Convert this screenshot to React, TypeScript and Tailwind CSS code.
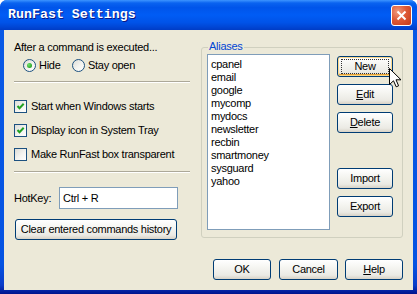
import React from "react";

const aliases = [
  "cpanel",
  "email",
  "google",
  "mycomp",
  "mydocs",
  "newsletter",
  "recbin",
  "smartmoney",
  "sysguard",
  "yahoo",
];

const btn =
  "flex items-center justify-center rounded-[3px] border border-[#003c74] bg-[linear-gradient(180deg,#ffffff_0%,#f5f5f1_40%,#ebeae4_80%,#d8d2c6_100%)] text-black";

function XpButton({
  className = "",
  children,
}: {
  className?: string;
  children: React.ReactNode;
}) {
  return <div className={`${btn} ${className}`}>{children}</div>;
}

function Radio({ checked }: { checked?: boolean }) {
  return (
    <div className="flex h-[13px] w-[13px] shrink-0 items-center justify-center rounded-full border border-[#1c5180] bg-[linear-gradient(135deg,#dcdcd7_0%,#f4f4f0_55%,#ffffff_100%)]">
      {checked && (
        <div className="h-[5px] w-[5px] rounded-full bg-[radial-gradient(circle_at_35%_35%,#6fe36a_0%,#2ca52a_70%,#1f8a1d_100%)]" />
      )}
    </div>
  );
}

function Check({ checked, label }: { checked?: boolean; label: string }) {
  return (
    <div className="flex h-[13px] items-center">
      <div className="relative h-[13px] w-[13px] shrink-0 border border-[#1c5180] bg-[linear-gradient(135deg,#dcdcd7_0%,#f4f4f0_55%,#ffffff_100%)]">
        {checked && (
          <svg width="11" height="11" viewBox="0 0 11 11" className="absolute left-0 top-0">
            <path d="M2.5 5 L4.5 7.2 L8.7 2.8" fill="none" stroke="#21a121" strokeWidth="2" />
          </svg>
        )}
      </div>
      <span className="ml-[4px] leading-[13px]">{label}</span>
    </div>
  );
}

function Separator() {
  return <div className="h-[2px] border-t border-t-[#aca899] border-b border-b-white" />;
}

export default function App() {
  return (
    <div className="h-[294px] w-[417px] bg-white font-['Liberation_Sans',Arial,sans-serif] text-[11px] tracking-[-0.28px] text-black">
      <div className="relative flex h-[294px] w-[417px] flex-col rounded-t-[7px] bg-[linear-gradient(180deg,#0a5ae6_0%,#0553e2_90%,#0a3cc8_97%,#00138c_100%)]">
        {/* title bar */}
        <div className="flex h-[30px] shrink-0 items-center rounded-t-[7px] bg-[linear-gradient(180deg,#3d95ff_0%,#0a63f0_10%,#0055ea_25%,#005cf5_50%,#0053e8_75%,#0046d5_90%,#003cc5_100%)] pl-[8px] pr-[5px]">
          <span className="flex-1 font-['Liberation_Mono',monospace] text-[13.3px] font-bold tracking-normal text-white [text-shadow:1px_1px_#0a1883]">
            RunFast Settings
          </span>
          <div className="flex h-[21px] w-[21px] items-center justify-center rounded-[3px] border border-white bg-[radial-gradient(circle_at_30%_30%,#f09a7e_0%,#de5a37_45%,#c2391a_100%)]">
            <svg width="11" height="11" viewBox="0 0 11 11">
              <path d="M1.5 1.5 L9.5 9.5 M9.5 1.5 L1.5 9.5" stroke="white" strokeWidth="2" />
            </svg>
          </div>
        </div>

        {/* client area */}
        <div className="mx-[4px] mb-[4px] flex flex-1 flex-col bg-[#ece9d8] px-[10px] pt-[11px]">
          <div className="flex gap-[11px]">
            {/* left column */}
            <div className="flex w-[176px] flex-col">
              <p className="h-[13px] leading-[13px]">After a command is executed...</p>
              <div className="mt-[5px] flex h-[13px] items-center pl-[9px]">
                <div className="flex w-[49px] items-center">
                  <Radio checked />
                  <span className="ml-[3px] leading-[13px]">Hide</span>
                </div>
                <Radio />
                <span className="ml-[3px] leading-[13px]">Stay open</span>
              </div>
              <div className="mt-[9px]">
                <Separator />
              </div>
              <div className="mt-[17px]">
                <Check checked label="Start when Windows starts" />
              </div>
              <div className="mt-[11px]">
                <Check checked label="Display icon in System Tray" />
              </div>
              <div className="mt-[11px]">
                <Check label="Make RunFast box transparent" />
              </div>
              <div className="mt-[10px]">
                <Separator />
              </div>
              <div className="mt-[14px] flex items-center">
                <span className="w-[45px]">HotKey:</span>
                <div className="flex h-[22px] w-[119px] items-center border border-[#7f9db9] bg-white pl-[3px]">
                  Ctrl + R
                </div>
              </div>
              <XpButton className="ml-[1px] mt-[10px] h-[21px] w-[162px]">
                Clear entered commands history
              </XpButton>
            </div>

            {/* aliases group */}
            <div className="relative mt-[6px] h-[191px] w-[202px] rounded-[3px] border border-[#d0d0bf]">
              <span className="absolute -top-[8px] left-[6px] bg-[#ece9d8] px-[1px] leading-[13px] text-[#0046d5]">
                Aliases
              </span>
              <div className="flex pl-[5px] pt-[6px]">
                <div className="h-[176px] w-[123px] border border-[#7f9db9] bg-white pl-[3px] pt-[3px]">
                  {aliases.map((a) => (
                    <div key={a} className="h-[13px] leading-[13px]">
                      {a}
                    </div>
                  ))}
                </div>
                <div className="ml-[7px] flex flex-col pt-[2px]">
                  <XpButton className="h-[21px] w-[56px] shadow-[inset_0_0_0_1px_#fbd88b,inset_0_-1px_0_1px_#e5a033]">
                    <div className="flex h-[15px] w-[48px] items-center justify-center border border-dotted border-[#333]">
                      New
                    </div>
                  </XpButton>
                  <XpButton className="mt-[7px] h-[21px] w-[56px]">
                    <span>
                      <u>E</u>dit
                    </span>
                  </XpButton>
                  <XpButton className="mt-[7px] h-[21px] w-[56px]">
                    <span>
                      <u>D</u>elete
                    </span>
                  </XpButton>
                  <XpButton className="mt-[35px] h-[21px] w-[56px]">Import</XpButton>
                  <XpButton className="mt-[7px] h-[21px] w-[56px]">Export</XpButton>
                </div>
              </div>
            </div>
          </div>

          {/* bottom buttons */}
          <div className="mt-[19px] flex justify-end">
            <XpButton className="h-[21px] w-[58px]">OK</XpButton>
            <XpButton className="ml-[8px] h-[21px] w-[59px]">Cancel</XpButton>
            <XpButton className="ml-[7px] h-[21px] w-[58px]">
              <span>
                <u>H</u>elp
              </span>
            </XpButton>
          </div>
        </div>

        {/* mouse cursor */}
        <svg
          width="13"
          height="20"
          viewBox="0 0 13 20"
          className="absolute left-[389px] top-[68px]"
        >
          <path
            d="M0.5 0.5 L0.5 16.5 L4.5 12.8 L7.2 18.8 L9.6 17.8 L7 11.8 L12 11.8 Z"
            fill="white"
            stroke="black"
            strokeWidth="1"
            strokeLinejoin="miter"
          />
        </svg>
      </div>
    </div>
  );
}
